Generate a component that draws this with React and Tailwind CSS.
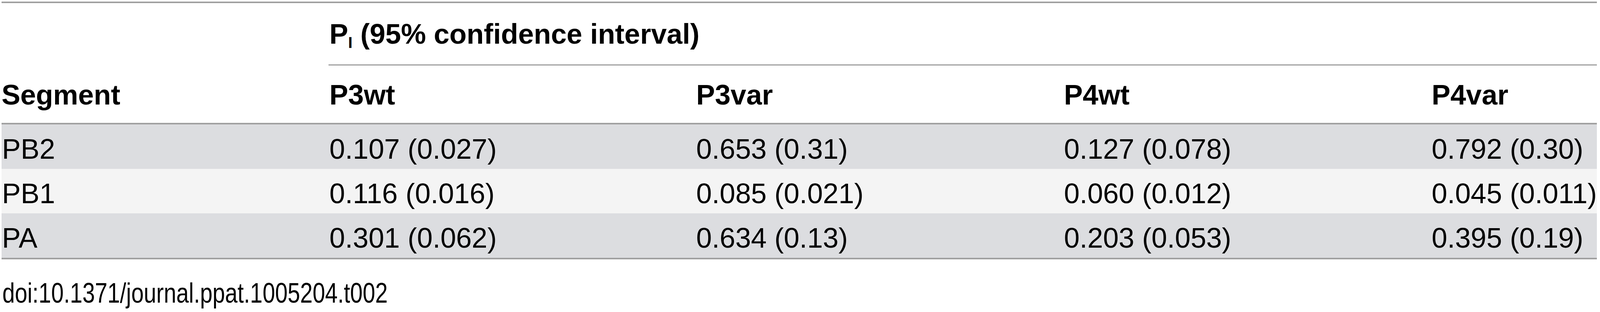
import React from 'react';

// --- DATA ---
const columns = ['P3wt', 'P3var', 'P4wt', 'P4var'];
const rows = [
  { segment: 'PB2', values: ['0.107 (0.027)', '0.653 (0.31)', '0.127 (0.078)', '0.792 (0.30)'], shaded: true },
  { segment: 'PB1', values: ['0.116 (0.016)', '0.085 (0.021)', '0.060 (0.012)', '0.045 (0.011)'], shaded: false },
  { segment: 'PA', values: ['0.301 (0.062)', '0.634 (0.13)', '0.203 (0.053)', '0.395 (0.19)'], shaded: true },
];
// ------------

export default function App() {
  return (
    <div
      className="w-full min-h-[800px] bg-white text-black pt-[4px] pl-[4px] pr-[8px] overflow-hidden"
      style={{ fontFamily: '"Liberation Sans", Arial, sans-serif' }}
    >
      <table className="w-full border-separate border-spacing-0 text-[72px] leading-[72px]">
        <colgroup>
          <col className="w-[20.93%]" />
          <col className="w-[23.4%]" />
          <col className="w-[23.46%]" />
          <col className="w-[23.46%]" />
          <col className="w-[8.75%]" />
        </colgroup>
        <thead>
          <tr>
            <th
              rowSpan={2}
              className="align-bottom text-left font-bold border-t-[4px] border-b-[4px] border-[#a0a0a0] pb-[36px]"
            >
              Segment
            </th>
            <th
              colSpan={4}
              className="text-left font-bold border-t-[4px] border-b-[3px] border-[#a0a0a0] pt-[43px] pb-[42px] pl-[2px] whitespace-nowrap"
            >
              P<span className="relative top-[11px] text-[40px] leading-none">I</span> (95% confidence interval)
            </th>
          </tr>
          <tr>
            {columns.map((c) => (
              <th
                key={c}
                className="text-left font-bold border-b-[4px] border-[#a0a0a0] pt-[39px] pb-[36px] pl-[2px]"
              >
                {c}
              </th>
            ))}
          </tr>
        </thead>
        <tbody>
          {rows.map((r, i) => {
            const last = i === rows.length - 1;
            return (
              <tr key={r.segment} className={r.shaded ? 'bg-[#dcdde0]' : 'bg-[#f4f4f4]'}>
                <td className={`pt-[27px] pb-[15px] pl-[1px] ${last ? 'border-b-[4px] border-[#a0a0a0]' : ''}`}>
                  {r.segment}
                </td>
                {r.values.map((v, j) => (
                  <td
                    key={j}
                    className={`pt-[27px] pb-[15px] pl-[2px] whitespace-nowrap ${last ? 'border-b-[4px] border-[#a0a0a0]' : ''}`}
                  >
                    {v}
                  </td>
                ))}
              </tr>
            );
          })}
        </tbody>
      </table>

      {/* Caption doi (condensed face in the original) */}
      <div className="mt-[50px] ml-[2px] text-[72px] leading-[72px] whitespace-nowrap origin-left scale-x-[0.8]">
        doi:10.1371/journal.ppat.1005204.t002
      </div>
    </div>
  );
}
